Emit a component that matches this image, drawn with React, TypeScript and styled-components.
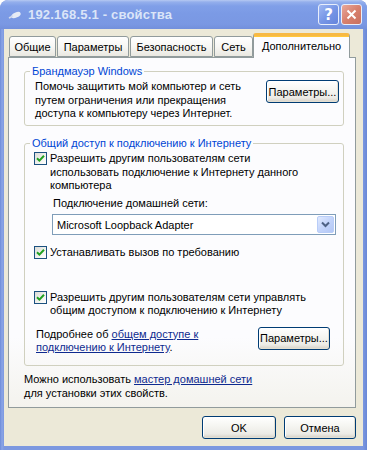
import React from 'react';
import styled, { createGlobalStyle } from 'styled-components';

const Global = createGlobalStyle`
  html, body { margin: 0; padding: 0; background: #ffffff; }
  body { font-family: "Liberation Sans", Arial, sans-serif; font-size: 11px; color: #000; }
  * { box-sizing: border-box; }
`;

const Window = styled.div`
  width: 367px;
  height: 450px;
  display: flex;
  flex-direction: column;
  background: linear-gradient(90deg, #6d8bd9 0px, #8aa5e6 2px, #7c98e0 4px, #7c98e0 calc(100% - 4px), #6a88d6 100%);
  border-radius: 8px 8px 0 0;
  overflow: hidden;
`;

const TitleBar = styled.div`
  height: 29px;
  flex: none;
  display: flex;
  align-items: center;
  padding: 0 5px 0 8px;
  background: linear-gradient(180deg, #b6c9f2 0px, #94afec 2px, #809fe8 6px, #7b9ae5 14px, #7a98e3 24px, #7390dc 29px);
  border-radius: 8px 8px 0 0;
`;

const TitleText = styled.span`
  flex: 1;
  margin-left: 6px;
  font-family: "Liberation Sans", Arial, sans-serif;
  font-weight: bold;
  font-size: 13px;
  letter-spacing: 0.2px;
  color: #dbe5f8;
`;

const CaptionButton = styled.div<{ $kind: 'help' | 'close' }>`
  width: 21px;
  height: 21px;
  margin-left: 2px;
  border: 1px solid #e8eefb;
  border-radius: 3px;
  display: flex;
  align-items: center;
  justify-content: center;
  background: ${p => p.$kind === 'close'
    ? 'linear-gradient(135deg, #e8a89b 0%, #d8806d 50%, #c9705f 100%)'
    : 'linear-gradient(135deg, #9fb8f3 0%, #7796e6 50%, #6584dc 100%)'};
  color: #ffffff;
  font-family: "DejaVu Sans", sans-serif;
  font-weight: bold;
  font-size: 15px;
`;

const Body = styled.div`
  flex: 1;
  margin: 0 4px 4px 4px;
  background: #ece9d8;
  display: flex;
  flex-direction: column;
  padding: 4px 7px 7px 4px;
`;

const TabRow = styled.div`
  height: 24px;
  flex: none;
  display: flex;
  align-items: flex-end;
  padding-left: 1px;
  position: relative;
  z-index: 1;
`;

const Tab = styled.div<{ $w: number; $active?: boolean; $last?: boolean }>`
  width: ${p => p.$w}px;
  height: ${p => (p.$active ? 25 : 21)}px;
  margin-bottom: ${p => (p.$active ? -1 : 0)}px;
  margin-right: ${p => (p.$active || p.$last ? 0 : 1)}px;
  border: 1px solid #919b9c;
  border-bottom: ${p => (p.$active ? 'none' : '1px solid #919b9c')};
  border-top: ${p => (p.$active ? '3px solid #f7b944' : '1px solid #919b9c')};
  border-radius: 3px 3px 0 0;
  background: ${p => (p.$active ? '#fcfcfe' : 'linear-gradient(180deg, #ffffff 0%, #f7f7f4 50%, #eae8e1 100%)')};
  display: flex;
  align-items: center;
  justify-content: center;
  padding-bottom: ${p => (p.$active ? 3 : 0)}px;
  white-space: nowrap;
  box-shadow: ${p => (p.$active ? 'inset 0 1px 0 #ffc83c' : 'none')};
`;

const Panel = styled.div`
  height: 351px;
  flex: none;
  border: 1px solid #919b9c;
  background: linear-gradient(180deg, #fcfcfe 0%, #fcfcfe 80%, #f4f3ee 100%);
  display: flex;
  flex-direction: column;
  padding: 7px 11px 0 15px;
`;

const Group = styled.fieldset<{ $h: number; $mt?: number }>`
  margin: ${p => p.$mt ?? 0}px 0 0 0;
  height: ${p => p.$h}px;
  border: 1px solid #d0d0bf;
  border-radius: 3px;
  padding: 0;
  min-width: 0;
`;

const Legend = styled.legend`
  margin-left: 5px;
  padding: 0 2px;
  line-height: 13px;
  color: #0046d5;
`;

const FirewallRow = styled.div`
  display: flex;
  align-items: flex-start;
  justify-content: space-between;
  padding: 2px 4px 0 10px;
`;

const Para = styled.div`
  line-height: 13.5px;
`;

const Button = styled.div<{ $w: number }>`
  width: ${p => p.$w}px;
  height: 23px;
  flex: none;
  border: 1px solid #003c74;
  border-radius: 3px;
  background: linear-gradient(180deg, #ffffff 0%, #f6f6f2 40%, #ecebe6 80%, #d6d0c5 100%);
  box-shadow: inset -1px -1px 0 #e3dfd2, inset 1px 1px 0 #ffffff;
  display: flex;
  align-items: center;
  justify-content: center;
  white-space: nowrap;
`;

const SharingBody = styled.div`
  display: flex;
  flex-direction: column;
  padding: 2px 8px 0 9px;
`;

const CheckRow = styled.div<{ $mt?: number }>`
  display: flex;
  align-items: flex-start;
  gap: 3px;
  margin-top: ${p => p.$mt ?? 0}px;
`;

const Box = styled.div`
  width: 13px;
  height: 13px;
  flex: none;
  margin-top: 0px;
  border: 1px solid #1c5180;
  background: linear-gradient(135deg, #dcdcd7 0%, #f2f2ef 60%, #ffffff 100%);
  display: flex;
  align-items: center;
  justify-content: center;
`;

const Indent = styled.div<{ $mt?: number }>`
  margin: ${p => p.$mt ?? 0}px 0 0 19px;
  line-height: 13.5px;
`;

const Combo = styled.div`
  margin: 4px 0 0 18px;
  width: 284px;
  height: 21px;
  border: 1px solid #7f9db9;
  background: #ffffff;
  display: flex;
  align-items: center;
  padding: 1px;
`;

const ComboText = styled.span`
  flex: 1;
  padding-left: 3px;
`;

const ComboButton = styled.div`
  width: 17px;
  height: 17px;
  border: 1px solid #b9cdf8;
  border-radius: 2px;
  background: linear-gradient(135deg, #e1eafe 0%, #c3d4fb 50%, #b3c7f5 100%);
  display: flex;
  align-items: center;
  justify-content: center;
`;

const MoreRow = styled.div`
  display: flex;
  align-items: flex-start;
  justify-content: space-between;
  margin-top: 9px;
  padding: 0 5px 0 2px;
`;

const MoreText = styled.div`
  line-height: 13.5px;
  padding-top: 1px;
`;

const Link = styled.span`
  color: #0e2a8f;
  text-decoration: underline;
`;

const Footer = styled.div`
  margin-top: 7px;
  line-height: 13.5px;
`;

const ButtonBar = styled.div`
  margin-top: 8px;
  display: flex;
  justify-content: flex-end;
  gap: 8px;
`;

const Check = () => (
  <svg width="9" height="9" viewBox="0 0 9 9">
    <path d="M1 4.2 L3.4 6.6 L8 1.8" stroke="#21a121" strokeWidth="2" fill="none" />
  </svg>
);

const Chevron = () => (
  <svg width="9" height="7" viewBox="0 0 9 7">
    <path d="M1 1.5 L4.5 5 L8 1.5" stroke="#4d6185" strokeWidth="2" fill="none" />
  </svg>
);

const CableIcon = () => (
  <svg width="14" height="10" viewBox="0 0 14 10">
    <ellipse cx="8" cy="5" rx="5" ry="2.6" fill="#e6ebf5" transform="rotate(-25 8 5)" />
    <path d="M1 8 L5 6" stroke="#d3dbee" strokeWidth="1.6" />
  </svg>
);

const CloseGlyph = () => (
  <svg width="11" height="11" viewBox="0 0 11 11">
    <path d="M1.5 1.5 L9.5 9.5 M9.5 1.5 L1.5 9.5" stroke="#ffffff" strokeWidth="2" />
  </svg>
);

export default function App() {
  return (
    <>
      <Global />
      <Window>
        <TitleBar>
          <CableIcon />
          <TitleText>192.168.5.1 - свойства</TitleText>
          <CaptionButton $kind="help">?</CaptionButton>
          <CaptionButton $kind="close"><CloseGlyph /></CaptionButton>
        </TitleBar>
        <Body>
          <TabRow>
            <Tab $w={47}>Общие</Tab>
            <Tab $w={72}>Параметры</Tab>
            <Tab $w={83}>Безопасность</Tab>
            <Tab $w={39} $last>Сеть</Tab>
            <Tab $w={97} $active>Дополнительно</Tab>
          </TabRow>
          <Panel>
            <Group $h={61}>
              <Legend>Брандмауэр Windows</Legend>
              <FirewallRow>
                <Para>
                  Помочь защитить мой компьютер и сеть<br />
                  путем ограничения или прекращения<br />
                  доступа к компьютеру через Интернет.
                </Para>
                <Button $w={73}>Параметры...</Button>
              </FirewallRow>
            </Group>
            <Group $h={229} $mt={11}>
              <Legend>Общий доступ к подключению к Интернету</Legend>
              <SharingBody>
                <CheckRow>
                  <Box><Check /></Box>
                  <Para>
                    Разрешить другим пользователям сети<br />
                    использовать подключение к Интернету данного<br />
                    компьютера
                  </Para>
                </CheckRow>
                <Indent $mt={4}>Подключение домашней сети:</Indent>
                <Combo>
                  <ComboText>Microsoft Loopback Adapter</ComboText>
                  <ComboButton><Chevron /></ComboButton>
                </Combo>
                <CheckRow $mt={11}>
                  <Box><Check /></Box>
                  <Para>Устанавливать вызов по требованию</Para>
                </CheckRow>
                <CheckRow $mt={31}>
                  <Box><Check /></Box>
                  <Para>
                    Разрешить другим пользователям сети управлять<br />
                    общим доступом к подключению к Интернету
                  </Para>
                </CheckRow>
                <MoreRow>
                  <MoreText>
                    Подробнее об <Link>общем доступе к</Link><br />
                    <Link>подключению к Интернету</Link>.
                  </MoreText>
                  <Button $w={72}>Параметры...</Button>
                </MoreRow>
              </SharingBody>
            </Group>
            <Footer>
              Можно использовать <Link>мастер домашней сети</Link><br />
              для установки этих свойств.
            </Footer>
          </Panel>
          <ButtonBar>
            <Button $w={74}>OK</Button>
            <Button $w={72}>Отмена</Button>
          </ButtonBar>
        </Body>
      </Window>
    </>
  );
}
